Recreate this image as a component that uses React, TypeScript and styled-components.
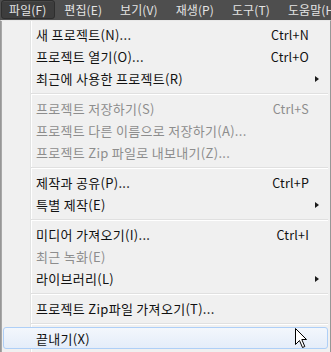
import React from "react";
import styled, { createGlobalStyle } from "styled-components";

const Global = createGlobalStyle`
  html, body { margin: 0; padding: 0; }
  body {
    width: 331px;
    height: 352px;
    overflow: hidden;
    background: #dcdcdc;
    font-family: "Noto Sans CJK KR", "Noto Sans", sans-serif;
    font-size: 12px;
  }
`;

const Page = styled.div`
  position: relative;
  width: 331px;
  height: 352px;
  overflow: hidden;
`;

const MenuBar = styled.div`
  display: flex;
  align-items: center;
  height: 20px;
  padding: 0 1px;
  background: #4e4e4e;
  gap: 1px;
  overflow: hidden;
`;

const BarItem = styled.div<{ $active?: boolean }>`
  display: flex;
  align-items: center;
  flex-shrink: 0;
  height: 17px;
  padding: 0 8px 0 7px;
  margin-top: -1px;
  color: #e4e4e4;
  font-size: 12px;
  letter-spacing: 0.1px;
  line-height: 17px;
  white-space: nowrap;
  border-radius: 3px;
  border: 1px solid ${(p) => (p.$active ? "#2e2e2e" : "transparent")};
  background: ${(p) => (p.$active ? "#3d3d3d" : "transparent")};
  box-shadow: ${(p) => (p.$active ? "inset 0 1px 0 #474747" : "none")};
`;

const Dropdown = styled.div`
  width: 327px;
  height: 329px;
  padding: 2px 0 0 2px;
  border: 1px solid #979797;
  border-top-color: #e8e8e8;
  box-shadow: inset 1px 0 0 #a8a8a8;
  background: linear-gradient(
    to right,
    #f0f0f0 29px,
    #e2e3e3 29px,
    #e2e3e3 30px,
    #ffffff 30px,
    #ffffff 31px,
    #f0f0f0 31px
  );
`;

const Row = styled.div<{ $disabled?: boolean; $hover?: boolean }>`
  display: grid;
  grid-template-columns: 1fr auto 18px;
  align-items: center;
  box-sizing: border-box;
  height: 22px;
  width: 325px;
  padding-left: 33px;
  color: ${(p) => (p.$disabled ? "#8d8d8d" : "#111111")};
  line-height: 22px;
  white-space: nowrap;
  border-radius: 3px;
  border: 1px solid ${(p) => (p.$hover ? "#aecff7" : "transparent")};
  background: ${(p) =>
    p.$hover ? "linear-gradient(to bottom, #f3f7fc, #e4edf9)" : "transparent"};
`;

const Label = styled.span`
  font-size: 13px;
  letter-spacing: 0.3px;
  transform: translateX(-1px);
`;

const Shortcut = styled.span`
  font-size: 12.5px;
  letter-spacing: 0.2px;
  text-align: right;
`;

const Arrow = styled.span`
  display: flex;
  justify-content: flex-start;
  padding-left: 6px;
`;

const Triangle = styled.span`
  width: 0;
  height: 0;
  border-top: 3.5px solid transparent;
  border-bottom: 3.5px solid transparent;
  border-left: 4px solid #1a1a1a;
`;

const Separator = styled.div`
  height: 8px;
  margin-left: 28px;
  width: 297px;
  box-sizing: border-box;
  padding-top: 4px;
  &::after {
    content: "";
    display: block;
    border-top: 1px solid #e0e0e0;
    border-bottom: 1px solid #ffffff;
  }
`;

const Cursor = styled.svg`
  position: absolute;
  left: 295px;
  top: 328px;
`;

type Item =
  | { sep: true }
  | {
      sep?: false;
      label: string;
      shortcut?: string;
      sub?: boolean;
      disabled?: boolean;
      hover?: boolean;
    };

const items: Item[] = [
  { label: "새 프로젝트(N)...", shortcut: "Ctrl+N" },
  { label: "프로젝트 열기(O)...", shortcut: "Ctrl+O" },
  { label: "최근에 사용한 프로젝트(R)", sub: true },
  { sep: true },
  { label: "프로젝트 저장하기(S)", shortcut: "Ctrl+S", disabled: true },
  { label: "프로젝트 다른 이름으로 저장하기(A)...", disabled: true },
  { label: "프로젝트 Zip 파일로 내보내기(Z)...", disabled: true },
  { sep: true },
  { label: "제작과 공유(P)...", shortcut: "Ctrl+P" },
  { label: "특별 제작(E)", sub: true },
  { sep: true },
  { label: "미디어 가져오기(I)...", shortcut: "Ctrl+I" },
  { label: "최근 녹화(E)", disabled: true },
  { label: "라이브러리(L)", sub: true },
  { sep: true },
  { label: "프로젝트 Zip파일 가져오기(T)..." },
  { sep: true },
  { label: "끝내기(X)", hover: true },
];

const bar = ["파일(F)", "편집(E)", "보기(V)", "재생(P)", "도구(T)", "도움말(H)"];

export default function App() {
  return (
    <Page>
      <Global />
      <MenuBar>
        {bar.map((b, i) => (
          <BarItem key={b} $active={i === 0}>
            {b}
          </BarItem>
        ))}
      </MenuBar>
      <Dropdown>
        {items.map((it, i) =>
          it.sep ? (
            <Separator key={i} />
          ) : (
            <Row key={i} $disabled={it.disabled} $hover={it.hover}>
              <Label>{it.label}</Label>
              <Shortcut>{it.shortcut ?? ""}</Shortcut>
              <Arrow>{it.sub ? <Triangle /> : null}</Arrow>
            </Row>
          )
        )}
      </Dropdown>
      <Cursor width="13" height="21" viewBox="0 0 13 21">
        <path
          d="M0.5 0.5 L0.5 16.5 L4.5 12.5 L7.5 19.5 L9.8 18.5 L6.8 11.5 L11.5 11.5 Z"
          fill="#ffffff"
          stroke="#000000"
          strokeWidth="1"
          strokeLinejoin="miter"
        />
      </Cursor>
    </Page>
  );
}
